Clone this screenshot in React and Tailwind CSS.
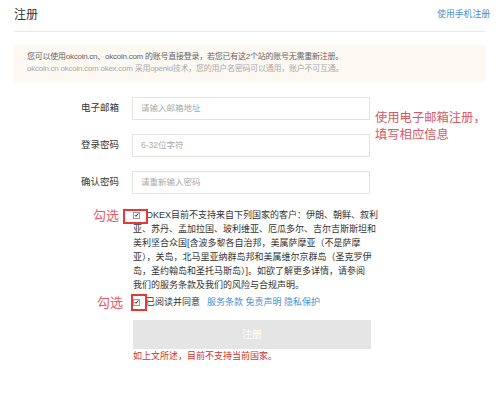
import React from 'react';

const font = "font-['Liberation_Sans','Noto_Sans_CJK_SC',sans-serif]";
const noteFont = "font-['Noto_Sans_CJK_SC',serif]";

const Check = ({ wide }) => (
  <span className="relative inline-flex w-[13px] items-center align-middle">
    <span className="flex h-[7px] w-[7px] items-center justify-center border border-[#999] bg-white">
      <svg width="6" height="6" viewBox="0 0 6 6">
        <path d="M1 3.2 L2.4 4.6 L5 1.2" stroke="#222" strokeWidth="1.2" fill="none" />
      </svg>
    </span>
    <span
      className={
        wide
          ? 'absolute left-[-10px] top-[-3px] h-[15px] w-[25px] border-2 border-[#e53935]'
          : 'absolute left-[-2px] top-[-5px] h-[17px] w-[16px] border-2 border-[#e53935]'
      }
    />
  </span>
);

const Field = ({ label, placeholder, children }) => (
  <div className="relative flex h-[23px] items-center pl-[67px]">
    <span className="w-[51px] text-[9.5px] text-[#333]">{label}</span>
    <div className="flex h-[23px] w-[238px] items-center border border-[#e3e3e3] pl-[8px] text-[8.5px] text-[#aaa]">
      {placeholder}
    </div>
    {children}
  </div>
);

const App = () => {
  const lines = [
    '亚、苏丹、孟加拉国、玻利维亚、厄瓜多尔、吉尔吉斯斯坦和',
    '美利坚合众国[含波多黎各自治邦，美属萨摩亚（不是萨摩',
    '亚），关岛，北马里亚纳群岛邦和美属维尔京群岛（圣克罗伊',
    '岛，圣约翰岛和圣托马斯岛）]。如欲了解更多详情，请参阅',
    '我们的服务条款及我们的风险与合规声明。',
  ];

  return (
    <div className={`h-[395px] w-[499px] overflow-hidden bg-white px-[14px] ${font}`}>
      <div className="flex h-[32px] items-center justify-between border-b border-[#e8e8e8] pb-[2px]">
        <span className="text-[12px] text-[#333]">注册</span>
        <span className="mr-[-5px] text-[8.8px] text-[#4a8fd2]">使用手机注册</span>
      </div>

      <div className="mt-[13px] h-[37px] bg-[#fdf8f2] px-[13px] pt-[6px] text-[8px] leading-[12px] tracking-[-0.25px]">
        <div className="text-[#666]">您可以使用okcoin.cn、okcoin.com 的账号直接登录，若您已有这2个站的账号无需重新注册。</div>
        <div className="text-[#aaa]">okcoin.cn okcoin.com okex.com 采用openid技术，您的用户名密码可以通用，账户不可互通。</div>
      </div>

      <div className="mt-[15px] flex flex-col gap-[14px]">
        <Field label="电子邮箱" placeholder="请输入邮箱地址">
          <div className={`absolute left-[361px] top-[12px] whitespace-nowrap text-[12.3px] leading-[17px] text-[#d9575f] ${noteFont}`}>
            <div>使用电子邮箱注册，</div>
            <div>填写相应信息</div>
          </div>
        </Field>
        <Field label="登录密码" placeholder="6-32位字符" />
        <Field label="确认密码" placeholder="请重新输入密码" />
      </div>

      <div className="mt-[14px] flex text-[9px] leading-[14px] text-[#333]">
        <div className="w-[119px] shrink-0">
          <span className={`ml-[79px] block pt-0 text-[13px] leading-[14px] text-[#e0606a] ${noteFont}`}>勾选</span>
        </div>
        <div className="w-[250px]">
          <div className="flex items-center">
            <Check wide />
            <span>OKEX目前不支持来自下列国家的客户：伊朗、朝鲜、叙利</span>
          </div>
          {lines.map((l) => (
            <div key={l}>{l}</div>
          ))}
        </div>
      </div>

      <div className="mt-[3px] flex text-[9px] leading-[14px] text-[#333]">
        <div className="w-[119px] shrink-0">
          <span className={`ml-[83px] block text-[13px] leading-[14px] text-[#e0606a] ${noteFont}`}>勾选</span>
        </div>
        <div className="flex items-center">
          <Check />
          <span>已阅读并同意</span>
          <span className="ml-[7px] text-[#4a8fd2]">服务条款 免责声明 隐私保护</span>
        </div>
      </div>

      <div className="ml-[119px] mt-[11px] flex h-[29px] w-[238px] items-center justify-center bg-[#e5e5e5] text-[10px] text-white">
        注册
      </div>
      <div className="ml-[119px] mt-[1px] text-[9px] leading-[12px] text-[#d0342c]">如上文所述，目前不支持当前国家。</div>
    </div>
  );
};

export default App;
